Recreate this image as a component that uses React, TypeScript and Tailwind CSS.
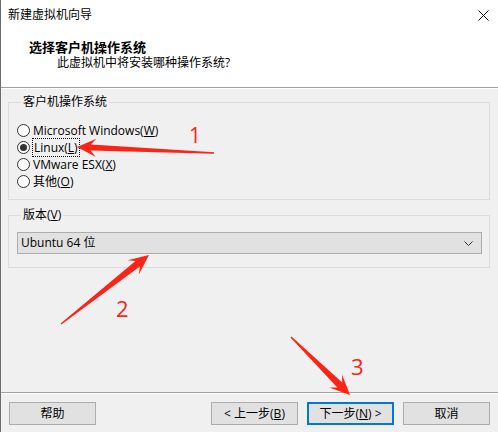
import React from "react";

type P = [number, number];

function arrowPoints(tip: P, tail: P, headLen: number, headHalf: number, shaftHead: number, shaftTail: number) {
  const dx = tip[0] - tail[0];
  const dy = tip[1] - tail[1];
  const L = Math.hypot(dx, dy);
  const ux = dx / L;
  const uy = dy / L;
  const nx = -uy;
  const ny = ux;
  const B: P = [tip[0] - headLen * ux, tip[1] - headLen * uy];
  const S: P = [tip[0] - headLen * 0.72 * ux, tip[1] - headLen * 0.72 * uy];
  const pts: P[] = [
    tip,
    [B[0] + headHalf * nx, B[1] + headHalf * ny],
    [S[0] + shaftHead * nx, S[1] + shaftHead * ny],
    [tail[0] + shaftTail * nx, tail[1] + shaftTail * ny],
    [tail[0] - shaftTail * nx, tail[1] - shaftTail * ny],
    [S[0] - shaftHead * nx, S[1] - shaftHead * ny],
    [B[0] - headHalf * nx, B[1] - headHalf * ny],
  ];
  return pts.map((p) => `${p[0].toFixed(1)},${p[1].toFixed(1)}`).join(" ");
}

function Radio({ checked, children }: { checked?: boolean; children: React.ReactNode }) {
  return (
    <div className="flex items-center h-[17px]">
      <span className="w-[13px] h-[13px] rounded-full border border-[#333] bg-white flex items-center justify-center shrink-0">
        {checked && <span className="w-[7px] h-[7px] rounded-full bg-[#333]" />}
      </span>
      <span className="ml-[3px] leading-[16px]">{children}</span>
    </div>
  );
}

function Btn({ children, primary }: { children: React.ReactNode; primary?: boolean }) {
  return (
    <div
      className={
        "w-[87px] h-[23px] flex items-center justify-center bg-[#e1e1e1] leading-[16px] " +
        (primary ? "border-2 border-[#0078d7]" : "border border-[#adadad]")
      }
    >
      {children}
    </div>
  );
}

export default function App() {
  const red = "#fb2417";
  return (
    <div className="w-[498px] h-[432px] relative overflow-hidden bg-[#f0f0f0] border-l border-[#6d6d6d] flex flex-col text-[12px] text-black font-['Open_Sans','Noto_Sans_CJK_SC',sans-serif]">
      {/* white header */}
      <div className="h-[87px] bg-white flex flex-col shrink-0">
        <div className="h-[30px] flex items-center justify-between pl-[7px] pr-[9px]">
          <span className="leading-[16px]">新建虚拟机向导</span>
          <svg width="11" height="11" viewBox="0 0 11 11">
            <path d="M0.5 0.5 L10.5 10.5 M10.5 0.5 L0.5 10.5" stroke="#111" strokeWidth="1" />
          </svg>
        </div>
        <div className="pl-[28px] mt-[9px]">
          <div className="font-bold text-[13px] leading-[16px]">选择客户机操作系统</div>
          <div className="pl-[28px] leading-[16px]">此虚拟机中将安装哪种操作系统?</div>
        </div>
      </div>
      <div className="h-px bg-[#a0a0a0] shrink-0" />
      <div className="h-px bg-white shrink-0" />

      {/* group 1 */}
      <fieldset className="ml-[7px] mt-[5px] w-[482px] border border-[#dcdcdc] pl-[8px] pt-[12px] pb-[9px]">
        <legend className="ml-[4px] px-[2px] leading-[16px]">客户机操作系统</legend>
        <Radio>
          Microsoft Windows(<span className="underline">W</span>)
        </Radio>
        <Radio checked>
          <span className="outline outline-1 outline-dotted outline-black px-[1px]">
            Linux(<span className="underline">L</span>)
          </span>
        </Radio>
        <Radio>
          VMware ESX(<span className="underline">X</span>)
        </Radio>
        <Radio>
          其他(<span className="underline">O</span>)
        </Radio>
      </fieldset>

      {/* group 2 */}
      <fieldset className="ml-[7px] mt-[7px] w-[482px] border border-[#dcdcdc] pl-[8px] pt-[9px] pb-[13px]">
        <legend className="ml-[4px] px-[2px] leading-[16px]">
          版本(<span className="underline">V</span>)
        </legend>
        <div className="w-[465px] h-[22px] bg-[#e1e1e1] border border-[#adadad] flex items-center justify-between pl-[3px] pr-[8px]">
          <span className="leading-[16px]">Ubuntu 64 位</span>
          <svg width="9" height="5" viewBox="0 0 9 5">
            <path d="M0.5 0.5 L4.5 4.5 L8.5 0.5" fill="none" stroke="#333" strokeWidth="1" />
          </svg>
        </div>
      </fieldset>

      <div className="flex-1" />
      <div className="h-px bg-[#a0a0a0] shrink-0" />
      <div className="h-px bg-white shrink-0" />
      <div className="flex items-center justify-between pl-[8px] pr-[8px] mt-[8px] mb-[7px] shrink-0">
        <Btn>帮助</Btn>
        <div className="flex gap-[9px]">
          <Btn>
            &lt; 上一步(<span className="underline">B</span>)
          </Btn>
          <Btn primary>
            下一步(<span className="underline">N</span>) &gt;
          </Btn>
          <Btn>取消</Btn>
        </div>
      </div>

      {/* annotations */}
      <svg className="absolute left-[-1px] top-0 pointer-events-none" width="498" height="432" viewBox="0 0 498 432">
        <polygon points={arrowPoints([77, 147], [214, 153], 19, 9, 3, 0.7)} fill={red} />
        <polygon points={arrowPoints([149, 255], [61, 324], 20, 9, 3.5, 0.7)} fill={red} />
        <polygon points={arrowPoints([350, 395], [291, 337], 20, 9, 3.5, 0.7)} fill={red} />
        <text x="189" y="143" fontSize="21" fill={red} fontFamily="Open Sans, sans-serif">1</text>
        <text x="116" y="317" fontSize="22" fill={red} fontFamily="Open Sans, sans-serif">2</text>
        <text x="351" y="375" fontSize="22" fill={red} fontFamily="Open Sans, sans-serif">3</text>
      </svg>
    </div>
  );
}
